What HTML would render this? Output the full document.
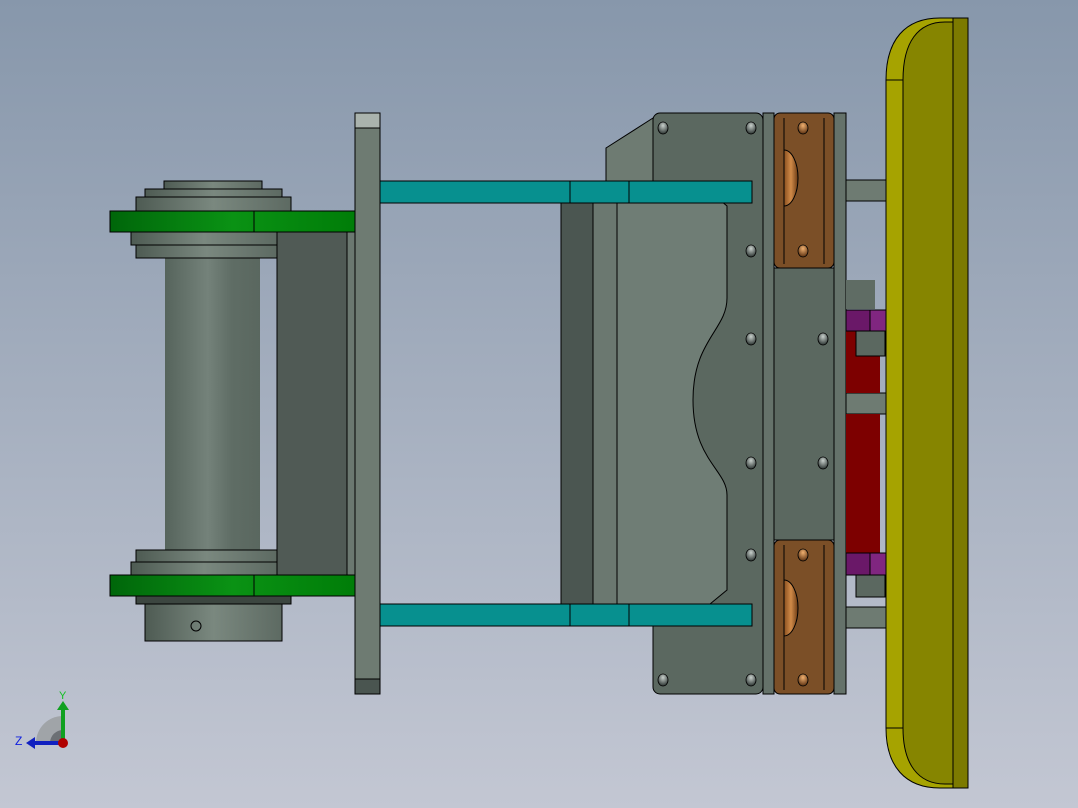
<!DOCTYPE html>
<html><head><meta charset="utf-8"><style>
html,body{margin:0;padding:0;width:1078px;height:808px;overflow:hidden}
svg{display:block}
</style></head><body>
<svg width="1078" height="808" viewBox="0 0 1078 808" xmlns="http://www.w3.org/2000/svg" font-family="Liberation Sans, sans-serif">
<defs>
<linearGradient id="bg" x1="0" y1="0" x2="0" y2="1"><stop offset="0" stop-color="#8797ab"/><stop offset="1" stop-color="#c3c7d3"/></linearGradient>
<linearGradient id="cyl" x1="0" y1="0" x2="1" y2="0"><stop offset="0" stop-color="#56645c"/><stop offset="0.45" stop-color="#74827a"/><stop offset="0.7" stop-color="#5f6d65"/><stop offset="1" stop-color="#5a675f"/></linearGradient>
<linearGradient id="grn" x1="0" y1="0" x2="1" y2="0"><stop offset="0" stop-color="#00660a"/><stop offset="0.5" stop-color="#0a9214"/><stop offset="1" stop-color="#007d08"/></linearGradient>
<linearGradient id="hub" x1="0" y1="0" x2="1" y2="0"><stop offset="0" stop-color="#4e5b53"/><stop offset="0.5" stop-color="#7a887f"/><stop offset="1" stop-color="#5d6a62"/></linearGradient>
<radialGradient id="hole" cx="0.5" cy="0.3" r="0.7"><stop offset="0" stop-color="#c8d0cc"/><stop offset="1" stop-color="#2a3230"/></radialGradient>
<radialGradient id="bhole" cx="0.5" cy="0.3" r="0.7"><stop offset="0" stop-color="#f0b070"/><stop offset="1" stop-color="#5a3010"/></radialGradient>
<linearGradient id="dome" x1="0" y1="0" x2="1" y2="0"><stop offset="0" stop-color="#8a5020"/><stop offset="0.5" stop-color="#d08a48"/><stop offset="1" stop-color="#6a3a14"/></linearGradient>
</defs>
<rect width="1078" height="808" fill="url(#bg)"/>
<g stroke="#000" stroke-width="1">
<rect x="164" y="181" width="98" height="8" fill="url(#hub)"/>
<rect x="145" y="189" width="137" height="8" fill="url(#hub)"/>
<rect x="136" y="197" width="155" height="14" fill="url(#hub)"/>
<rect x="165" y="258" width="95" height="292" fill="url(#cyl)" stroke="none"/>
<rect x="131" y="232" width="146" height="13" fill="url(#hub)"/>
<rect x="136" y="245" width="141" height="13" fill="url(#hub)"/>
<rect x="136" y="550" width="141" height="12" fill="url(#hub)"/>
<rect x="131" y="562" width="146" height="13" fill="url(#hub)"/>
<rect x="136" y="596" width="155" height="8" fill="#3c4640"/>
<rect x="145" y="604" width="137" height="37" fill="url(#hub)"/>
<circle cx="196" cy="626" r="5" fill="none"/>
<rect x="277" y="232" width="70" height="343" fill="#505a55"/>
<rect x="347" y="232" width="9" height="343" fill="#6b7870"/>
<rect x="110" y="211" width="245" height="21" fill="url(#grn)"/>
<line x1="254" y1="211" x2="254" y2="232"/>
<rect x="110" y="575" width="245" height="21" fill="url(#grn)"/>
<line x1="254" y1="575" x2="254" y2="596"/>
<rect x="355" y="113" width="25" height="581" fill="#6e7b72"/>
<rect x="355" y="113" width="25" height="15" fill="#aab3ad"/>
<rect x="355" y="679" width="25" height="15" fill="#4a5550"/>
<polygon points="606,148 653,118 653,200 606,200" fill="#6e7b72"/>
<rect x="561" y="203" width="32" height="401" fill="#4b5651"/>
<rect x="593" y="203" width="24" height="401" fill="#6b7870"/>
<rect x="653" y="113" width="110" height="581" rx="7" fill="#5b6860"/>
<path d="M617,190 L708,190 L727,206 L727,298 C727,330 693,340 693,400 C693,460 727,470 727,495 L727,590 L710,604 L617,604 Z" fill="#6f7d75"/>
<rect x="763" y="113" width="11" height="581" fill="#65726a"/>
<rect x="774" y="268" width="60" height="272" fill="#5b6860"/>
<rect x="774" y="113" width="60" height="155" rx="6" fill="#7b4f27"/>
<rect x="774" y="540" width="60" height="154" rx="6" fill="#7b4f27"/>
<line x1="784" y1="118" x2="784" y2="264"/><line x1="824" y1="118" x2="824" y2="264"/>
<line x1="784" y1="545" x2="784" y2="690"/><line x1="824" y1="545" x2="824" y2="690"/>
<path d="M784,150 A14,28 0 0 1 784,206 Z" fill="url(#dome)"/>
<path d="M784,580 A14,28 0 0 1 784,636 Z" fill="url(#dome)"/>
<rect x="834" y="113" width="12" height="581" fill="#65726a"/>
<rect x="380" y="181" width="372" height="22" fill="#07908f"/>
<line x1="570" y1="181" x2="570" y2="203"/><line x1="629" y1="181" x2="629" y2="203"/>
<rect x="380" y="604" width="372" height="22" fill="#07908f"/>
<line x1="570" y1="604" x2="570" y2="626"/><line x1="629" y1="604" x2="629" y2="626"/>
<rect x="846" y="180" width="42" height="21" fill="#6e7b72"/>
<rect x="846" y="393" width="42" height="21" fill="#6e7b72"/>
<rect x="846" y="607" width="42" height="21" fill="#6e7b72"/>
<rect x="846" y="280" width="29" height="29" fill="#5f6c64" stroke="none"/>
<rect x="846" y="331" width="34" height="62" fill="#7d0000" stroke="none"/>
<rect x="846" y="414" width="34" height="139" fill="#7d0000" stroke="none"/>
<rect x="856" y="331" width="29" height="25" fill="#5b6860"/>
<rect x="846" y="310" width="24" height="21" fill="#6a1868"/><rect x="870" y="310" width="16" height="21" fill="#802680"/>
<rect x="846" y="553" width="24" height="22" fill="#6a1868"/><rect x="870" y="553" width="16" height="22" fill="#802680"/>
<rect x="856" y="575" width="29" height="22" fill="#5b6860"/>
<path d="M886,80 C886,40 905,18 940,18 L968,18 L968,788 L940,788 C905,788 886,766 886,728 Z" fill="#a6a300"/>
<path d="M903,80 C903,42 918,22 945,22 L968,22 L968,784 L945,784 C918,784 903,764 903,728 Z" fill="#868500"/>
<line x1="886" y1="80" x2="903" y2="80"/><line x1="886" y1="728" x2="903" y2="728"/>
<rect x="953" y="18" width="15" height="770" fill="#7c7a00"/>
</g>
<g stroke="#000" stroke-width="0.8">
<ellipse cx="663" cy="128" rx="5" ry="6" fill="url(#hole)"/><ellipse cx="663" cy="680" rx="5" ry="6" fill="url(#hole)"/>
<ellipse cx="751" cy="128" rx="5" ry="6" fill="url(#hole)"/><ellipse cx="751" cy="251" rx="5" ry="6" fill="url(#hole)"/>
<ellipse cx="751" cy="339" rx="5" ry="6" fill="url(#hole)"/><ellipse cx="751" cy="463" rx="5" ry="6" fill="url(#hole)"/>
<ellipse cx="751" cy="555" rx="5" ry="6" fill="url(#hole)"/><ellipse cx="751" cy="680" rx="5" ry="6" fill="url(#hole)"/>
<ellipse cx="823" cy="339" rx="5" ry="6" fill="url(#hole)"/><ellipse cx="823" cy="463" rx="5" ry="6" fill="url(#hole)"/>
<ellipse cx="803" cy="128" rx="5" ry="6" fill="url(#bhole)"/><ellipse cx="803" cy="251" rx="5" ry="6" fill="url(#bhole)"/>
<ellipse cx="803" cy="555" rx="5" ry="6" fill="url(#bhole)"/><ellipse cx="803" cy="680" rx="5" ry="6" fill="url(#bhole)"/>
</g>
<path d="M36,743 A27,27 0 0 1 63,716 L63,743 Z" fill="#a0a4a8"/>
<path d="M50,743 A13,13 0 0 1 63,730 L63,743 Z" fill="#6c7074"/>
<rect x="61" y="708" width="4" height="34" fill="#10a020"/><polygon points="57,710 63,701 69,710" fill="#10a020"/>
<rect x="33" y="741" width="28" height="4" fill="#1020c0"/><polygon points="35,737 26,743 35,749" fill="#1020c0"/>
<circle cx="63" cy="743" r="5" fill="#b00000"/>
<text x="59" y="699" font-size="11" fill="#10c020">Y</text>
<text x="15" y="745" font-size="12" fill="#1020e0">Z</text>
</svg>
</body></html>
